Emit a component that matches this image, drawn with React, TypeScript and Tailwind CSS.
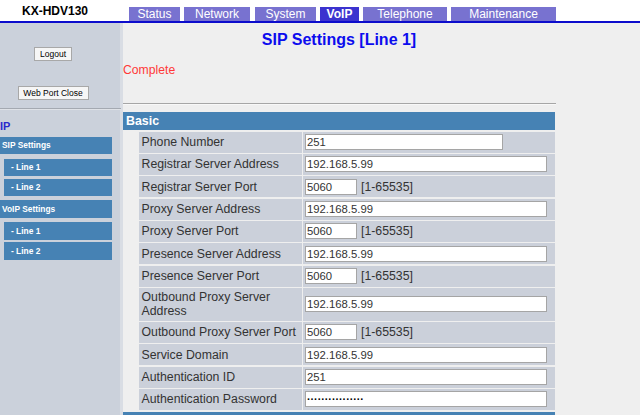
import React from "react";

type Row = { label: string; kind: "short" | "addr" | "port" | "pass"; value: string; tall?: boolean };

const rows: Row[] = [
  { label: "Phone Number", kind: "short", value: "251" },
  { label: "Registrar Server Address", kind: "addr", value: "192.168.5.99" },
  { label: "Registrar Server Port", kind: "port", value: "5060" },
  { label: "Proxy Server Address", kind: "addr", value: "192.168.5.99" },
  { label: "Proxy Server Port", kind: "port", value: "5060" },
  { label: "Presence Server Address", kind: "addr", value: "192.168.5.99" },
  { label: "Presence Server Port", kind: "port", value: "5060" },
  { label: "Outbound Proxy Server Address", kind: "addr", value: "192.168.5.99", tall: true },
  { label: "Outbound Proxy Server Port", kind: "port", value: "5060" },
  { label: "Service Domain", kind: "addr", value: "192.168.5.99" },
  { label: "Authentication ID", kind: "addr", value: "251" },
  { label: "Authentication Password", kind: "pass", value: "················" },
];

const tabs = [
  { name: "Status", cls: "ml-[6px] w-[51px] bg-[#7872d0] font-normal" },
  { name: "Network", cls: "ml-[4px] w-[66px] bg-[#7872d0] font-normal" },
  { name: "System", cls: "ml-[5px] w-[61px] bg-[#7872d0] font-normal" },
  { name: "VoIP", cls: "ml-[4px] w-[39px] bg-[#3c33cf] font-bold" },
  { name: "Telephone", cls: "ml-[4px] w-[84px] bg-[#7872d0] font-normal" },
  { name: "Maintenance", cls: "ml-[4px] w-[105px] bg-[#7872d0] font-normal" },
];

const inputBase =
  "h-[16px] border border-[#a5a5a5] bg-white px-[1px] text-[11.3px] leading-[14px] text-[#333] outline-none font-['Liberation_Sans',Arial,sans-serif]";

function Field({ row }: { row: Row }) {
  if (row.kind === "short") return <input readOnly defaultValue={row.value} className={`${inputBase} w-[198px]`} />;
  if (row.kind === "addr") return <input readOnly defaultValue={row.value} className={`${inputBase} w-[242px]`} />;
  if (row.kind === "pass")
    return (
      <input
        readOnly
        defaultValue={row.value}
        className="h-[16px] w-[242px] border border-[#a5a5a5] bg-white px-[1px] text-[10.7px] font-bold leading-[14px] text-black outline-none font-['Liberation_Sans',Arial,sans-serif]"
      />
    );
  return (
    <div className="flex items-center">
      <input readOnly defaultValue={row.value} className={`${inputBase} w-[52px]`} />
      <span className="ml-[4px] text-[12.3px] text-[#333]">[1-65535]</span>
    </div>
  );
}

function SideItem({ text, sub, cls }: { text: string; sub?: boolean; cls: string }) {
  const shape = sub ? "ml-[4px] w-[108px] pl-[7px]" : "w-[112px] pl-[2px]";
  return (
    <div
      className={`${cls} ${shape} flex h-[17.5px] items-center bg-[#4682b4] text-[8.4px] font-bold text-white`}
    >
      {text}
    </div>
  );
}

export default function App() {
  return (
    <div className="relative h-[415px] w-[640px] overflow-hidden bg-white font-['Liberation_Sans',Arial,sans-serif]">
      {/* header */}
      <div className="flex h-[21px] items-end">
        <div className="flex h-[21px] w-[123px] items-center">
          <span className="ml-[22px] text-[12px] font-bold leading-[14px] text-black">KX-HDV130</span>
        </div>
        {tabs.map((t) => (
          <div
            key={t.name}
            className={`${t.cls} flex h-[14px] items-center justify-center text-[12px] leading-[14px] text-white`}
          >
            {t.name}
          </div>
        ))}
      </div>
      <div className="h-[2px] bg-[#0c0ccc]" />

      <div className="flex h-[392px]">
        {/* sidebar */}
        <div className="flex w-[123px] flex-col border-r-[3px] border-[#d9dde4] bg-[#cbd1db]">
          <div className="flex w-[106px] flex-col items-center">
            <button className="mt-[24px] h-[14px] w-[38px] border border-[#a8a8a8] bg-[#f6f6f6] text-[8.5px] leading-[12px] text-black">
              Logout
            </button>
            <button className="mt-[24.5px] h-[14px] w-[71px] border border-[#a8a8a8] bg-[#f6f6f6] text-[8.5px] leading-[12px] text-black">
              Web Port Close
            </button>
          </div>
          <div className="mt-[8px] h-[2px] w-[121px] border-t border-[#a4a9b1] bg-[#dfe2e7]" />
          <div className="mt-[10px] text-[11px] font-bold leading-[13px] text-[#2a2acc]">IP</div>
          <SideItem text="SIP Settings" cls="mt-[4.3px]" />
          <SideItem text="- Line 1" sub cls="mt-[4.3px]" />
          <SideItem text="- Line 2" sub cls="mt-[2.5px]" />
          <SideItem text="VoIP Settings" cls="mt-[4.3px]" />
          <SideItem text="- Line 1" sub cls="mt-[4.3px]" />
          <SideItem text="- Line 2" sub cls="mt-[2.5px]" />
        </div>

        {/* content */}
        <div className="flex flex-1 flex-col bg-[#efefef]">
          <div className="w-[432px]">
            <div className="mt-[8.2px] text-center text-[16px] font-bold leading-[18px] text-[#0c0cee]">
              SIP Settings [Line 1]
            </div>
            <div className="mt-[13.6px] text-[12.2px] leading-[14px] text-[#ff3838]">Complete</div>
            <div className="mt-[26.5px] h-[2px] w-[433px] border-t border-[#a6a6a6] bg-[#f8f8f8]" />
            <div className="mt-[7px] flex h-[17.7px] items-center bg-[#4682b4] pl-[3px] text-[12.4px] font-bold text-white">
              Basic
            </div>
            <div className="mt-[1.7px] flex flex-col gap-y-[1.33px]">
              {rows.map((r) => (
                <div key={r.label} className={`flex ${r.tall ? "h-[32.67px]" : "h-[21px]"}`}>
                  <div className="w-[15.5px]" />
                  <div className="flex w-[163.2px] items-center bg-[#cbd0da] pl-[3px] text-[12.3px] leading-[14px] text-[#333]">
                    {r.label}
                  </div>
                  <div className="ml-[1.3px] flex flex-1 items-center bg-[#cbd0da] pl-[2px]">
                    <Field row={r} />
                  </div>
                </div>
              ))}
            </div>
            <div className="mt-[1.7px] h-[6px] bg-[#4682b4]" />
          </div>
        </div>
      </div>
    </div>
  );
}
